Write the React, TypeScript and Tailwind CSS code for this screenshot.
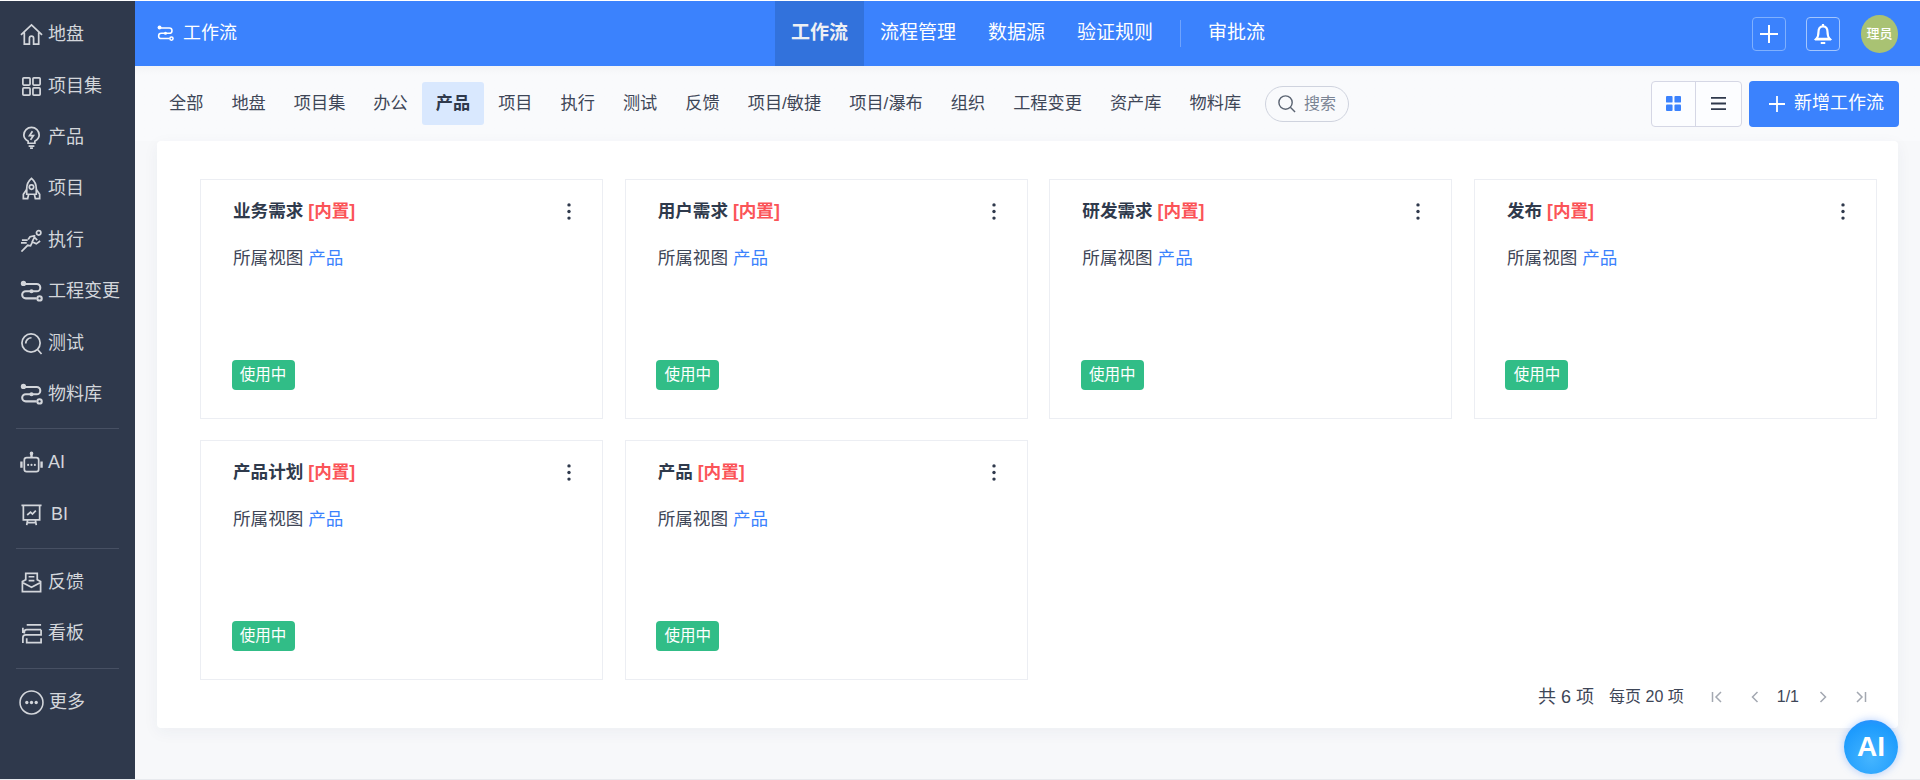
import React from 'react'

const font = { fontFamily: '"Liberation Sans", "Noto Sans CJK SC", sans-serif' }

function Route({ className }: { className?: string }) {
  return (
    <svg viewBox="0 0 20 20" fill="none" stroke="currentColor" strokeWidth="1.800" className={className}>
      <circle cx="3" cy="3" r="2.300" fill="currentColor" stroke="none" />
      <path d="M4 3.500h10.500a3 3 0 0 1 0 6.300H5a3 3 0 0 0 0 6.200h9.500" />
      <circle cx="10" cy="9.800" r="1.800" fill="currentColor" stroke="none" />
      <circle cx="17" cy="16" r="1.900" />
    </svg>
  )
}

const icons: Record<string, React.ReactNode> = {
  home: <path d="M1 12.500 12 2l11 10.500M4.500 10v12h5.300v-6a2.200 2.200 0 0 1 4.400 0v6h5.300V10" />,
  grid: (
    <>
      <rect x="3" y="3" width="7.500" height="7.500" rx="1" />
      <rect x="13.500" y="3" width="7.500" height="7.500" rx="1" />
      <rect x="3" y="13.500" width="7.500" height="7.500" rx="1" />
      <rect x="13.500" y="13.500" width="7.500" height="7.500" rx="1" />
    </>
  ),
  bulb: (
    <>
      <path d="M8.500 18v-2.200C6 14.500 4 12.300 4 9.500a8 8 0 0 1 16 0c0 2.800-2 5-4.500 6.300V18z" />
      <path d="M13 5.500 10 10h4l-3 4.500M9 21h6M10.500 23h3" />
    </>
  ),
  rocket: (
    <>
      <path d="M12 1.500c3.500 3 5 6.500 5 10.500v6H7v-6c0-4 1.500-7.500 5-10.500z" />
      <circle cx="12" cy="10.500" r="2.300" />
      <path d="M7 13l-3.500 5v4.500H8l1-4.500M17 13l3.500 5v4.500H16l-1-4.500" />
    </>
  ),
  run: (
    <>
      <circle cx="19.500" cy="4" r="2.300" />
      <path d="M1.500 23.500 8 17l3 .5 2-4 4 2 4-3M16 7l-5.500 1-2 3M12.500 14 15 8.500l3 3M2 11.500h6M1 14.500h6" />
    </>
  ),
  search: (
    <>
      <circle cx="11.500" cy="11.500" r="9.500" />
      <path d="M12 6a6 6 0 0 0-6 6M18.500 18.500l4 4.500" />
    </>
  ),
  bot: (
    <>
      <rect x="4.500" y="7" width="15" height="14.500" rx="2.500" />
      <path d="M12 7V3M1.500 11v6.500M22.500 11v6.500" strokeWidth="2.500" />
      <circle cx="12" cy="2.500" r="1" fill="currentColor" />
      <circle cx="8.500" cy="14.500" r="1.100" fill="currentColor" stroke="none" />
      <circle cx="12" cy="14.500" r="1.100" fill="currentColor" stroke="none" />
      <circle cx="15.500" cy="14.500" r="1.100" fill="currentColor" stroke="none" />
    </>
  ),
  board: (
    <>
      <path d="M1.500 2.500h21M3.500 2.500v15h17v-15M8 17.500 7 23M16 17.500l1 5.500M7 20.500h10" />
      <path d="m7.500 12.500 3.500-3 2 2 3.500-3.500" />
    </>
  ),
  mail: (
    <>
      <path d="M2.500 11 6 9V2.500h12V9l3.500 2v10.500h-19zM2.500 12l9.500 5 9.500-5" />
      <path d="M9 6h6M9 10h6" />
    </>
  ),
  kanban: (
    <path d="M22 3H7M3 6v5.500M22 8H7a2.500 2.500 0 0 0-2.500 2.500V12M22 8v5.500H6a3 3 0 0 0-3 3V22M7 17v4.500h15V17" />
  ),
}

function NavIcon({ name }: { name: string }) {
  return (
    <svg viewBox="0 0 24 24" fill="none" stroke="currentColor" strokeWidth="1.800" className="w-[23px] h-[23px] shrink-0">
      {icons[name]}
    </svg>
  )
}

function SideItem({ icon, label, gap }: { icon: string; label: string; gap?: boolean }) {
  return (
    <div className={gap ? 'h-[51.400px] flex items-center gap-[8px] pl-[20px] text-[18px] text-[#d3d6db]' : 'h-[51.400px] flex items-center gap-[5px] pl-[20px] text-[18px] text-[#d3d6db]'}>
      {icon === 'route' ? <Route className="w-[23px] h-[23px] shrink-0" /> : <NavIcon name={icon} />}
      <span>{label}</span>
    </div>
  )
}

function Sidebar() {
  return (
    <aside className="w-[135px] shrink-0 bg-[#2f394c] pt-[8px]">
      <SideItem icon="home" label="地盘" />
      <SideItem icon="grid" label="项目集" />
      <SideItem icon="bulb" label="产品" />
      <SideItem icon="rocket" label="项目" />
      <SideItem icon="run" label="执行" />
      <SideItem icon="route" label="工程变更" />
      <SideItem icon="search" label="测试" />
      <SideItem icon="route" label="物料库" />
      <div className="mx-[16px] mt-[8px] mb-[8px] h-px bg-[#475063]" />
      <SideItem icon="bot" label="AI" />
      <SideItem icon="board" label="BI" gap />
      <div className="mx-[16px] my-[8px] h-px bg-[#475063]" />
      <SideItem icon="mail" label="反馈" />
      <SideItem icon="kanban" label="看板" />
      <div className="mx-[16px] my-[8px] h-px bg-[#475063]" />
      <div className="h-[51.400px] flex items-center gap-[5px] pl-[19px] text-[18px] text-[#d3d6db]">
        <svg viewBox="0 0 24 24" fill="none" stroke="currentColor" strokeWidth="1.500" className="w-[25px] h-[25px] shrink-0">
          <circle cx="12" cy="12" r="11" />
          <circle cx="7.500" cy="12" r="1.600" fill="currentColor" stroke="none" />
          <circle cx="12" cy="12" r="1.600" fill="currentColor" stroke="none" />
          <circle cx="16.500" cy="12" r="1.600" fill="currentColor" stroke="none" />
        </svg>
        <span>更多</span>
      </div>
    </aside>
  )
}

function TopBar() {
  return (
    <header className="h-[65px] shrink-0 bg-[#3b82fd] flex items-center text-white">
      <div className="w-[640px] shrink-0 pl-[22px] flex items-center gap-[9px] text-[18px]">
        <Route className="w-[17px] h-[17px]" />
        <span>工作流</span>
      </div>
      <nav className="flex h-full items-center text-[19px]">
        <a className="h-full flex items-center px-4 bg-[#3272dc] font-bold text-[#eef0f4]">工作流</a>
        <a className="px-4">流程管理</a>
        <a className="px-4">数据源</a>
        <a className="px-4">验证规则</a>
        <span className="ml-[11px] mr-[27px] w-px h-[27px] bg-[#6fa3fd]" />
        <a>审批流</a>
      </nav>
      <div className="ml-auto mr-[22px] flex items-center">
        <button className="w-[34px] h-[34px] rounded-[4px] border border-[#7fb0fe] flex items-center justify-center">
          <svg viewBox="0 0 20 20" className="w-[20px] h-[20px]" stroke="currentColor" strokeWidth="2">
            <path d="M10 1v18M1 10h18" />
          </svg>
        </button>
        <button className="ml-[20px] w-[34px] h-[34px] rounded-[4px] border border-[#a3c6fe] flex items-center justify-center">
          <svg viewBox="0 0 20 24" className="w-[18px] h-[22px]" fill="none" stroke="currentColor" strokeWidth="2.400">
            <path d="M10 1v2.500M10 3.500c-3.500 0-5 2.700-5 6 0 3.500-.5 6-2.500 8h15c-2-2-2.500-4.500-2.500-8 0-3.300-1.500-6-5-6zM1 18h18M7.500 22h5" />
          </svg>
        </button>
        <div className="ml-[21px] w-[37px] h-[38px] rounded-full bg-[#a9c273] flex items-center justify-center text-[13px] font-medium">理员</div>
      </div>
    </header>
  )
}

const tabs = ['全部', '地盘', '项目集', '办公', '产品', '项目', '执行', '测试', '反馈', '项目/敏捷', '项目/瀑布', '组织', '工程变更', '资产库', '物料库']

function TabBar() {
  return (
    <div className="h-[75px] shrink-0 flex items-center pl-[20px] pr-[21px] bg-gradient-to-b from-[#f3f4f6] to-[#f9fafc] to-[12%]">
      {tabs.map((t) => (
        <a
          key={t}
          className={
            t === '产品'
              ? 'h-[43px] flex items-center px-[14px] rounded-[3px] bg-[#d9e8fe] font-bold text-[#2f394c] text-[17.200px]'
              : 'h-[43px] flex items-center px-[14px] text-[#3e4657] text-[17.200px]'
          }
        >
          {t}
        </a>
      ))}
      <div className="ml-[10px] w-[84px] h-[36px] rounded-full border border-[#cfd3de] flex items-center pl-[11px] gap-[8px] text-[16px] text-[#7b8494]">
        <svg viewBox="0 0 20 20" fill="none" stroke="#5b6472" strokeWidth="1.500" className="w-[19px] h-[19px]">
          <circle cx="9" cy="9" r="7" />
          <path d="m14 14 5 5" />
        </svg>
        <span>搜索</span>
      </div>
      <div className="ml-auto flex h-[46px] w-[91px] rounded-[4px] border border-[#d5d7e5] bg-[#fcfdff]">
        <div className="w-[44px] border-r border-[#d5d7e5] flex items-center justify-center">
          <svg viewBox="0 0 16 16" className="w-[15px] h-[15px]" fill="#3b82fd">
            <rect width="7" height="7" rx="1" />
            <rect x="9" width="7" height="7" rx="1" />
            <rect y="9" width="7" height="7" rx="1" />
            <rect x="9" y="9" width="7" height="7" rx="1" />
          </svg>
        </div>
        <div className="flex-1 flex items-center justify-center">
          <svg viewBox="0 0 16 16" className="w-[15px] h-[15px]" stroke="#2f394c" strokeWidth="2">
            <path d="M0 2h16M0 8h16M0 14h16" />
          </svg>
        </div>
      </div>
      <button className="ml-[7px] w-[150px] h-[46px] rounded-[4px] bg-[#3b82fd] text-white text-[18px] flex items-center pl-[20px] gap-[9px]">
        <svg viewBox="0 0 16 16" className="w-[16px] h-[16px]" stroke="currentColor" strokeWidth="1.800">
          <path d="M8 0v16M0 8h16" />
        </svg>
        新增工作流
      </button>
    </div>
  )
}

function WorkCard({ title }: { title: string }) {
  return (
    <div className="h-[240px] border border-[#eceef3] pl-[32px] pr-[31px] flex flex-col">
      <div className="mt-[18px] h-[26px] flex items-center justify-between text-[17.600px]">
        <div className="font-bold text-[#2f3a4c]">
          {title} <span className="text-[#fb5458]">[内置]</span>
        </div>
        <svg viewBox="0 0 4 18" className="w-[4px] h-[17px]" fill="#2f394c">
          <circle cx="2" cy="2" r="1.800" />
          <circle cx="2" cy="9" r="1.800" />
          <circle cx="2" cy="16" r="1.800" />
        </svg>
      </div>
      <div className="mt-[21px] text-[17.600px] text-[#3e4657]">
        所属视图 <span className="text-[#3b82fd]">产品</span>
      </div>
      <div className="mt-auto mb-[28px] -ml-[1.500px] w-[63px] h-[30px] rounded-[4px] bg-[#31bd87] text-white text-[15.500px] flex items-center justify-center">使用中</div>
    </div>
  )
}

function Pager() {
  return (
    <div className="-mt-[6px] h-[46px] flex items-center justify-end text-[#3e4657]">
      <span className="text-[18px]">共 6 项</span>
      <span className="ml-[15px] text-[16px]">每页 20 项</span>
      <svg viewBox="0 0 12 12" className="ml-[27px] w-[12px] h-[12px]" fill="none" stroke="#a3a8b1" strokeWidth="1.500">
        <path d="M1.500 1v10M10 1 5 6l5 5" />
      </svg>
      <svg viewBox="0 0 12 12" className="ml-[26px] w-[12px] h-[12px]" fill="none" stroke="#a3a8b1" strokeWidth="1.500">
        <path d="M8.500 1l-5 5 5 5" />
      </svg>
      <span className="ml-[16px] text-[16px]">1/1</span>
      <svg viewBox="0 0 12 12" className="ml-[18px] w-[12px] h-[12px]" fill="none" stroke="#a3a8b1" strokeWidth="1.500">
        <path d="M3.500 1l5 5-5 5" />
      </svg>
      <svg viewBox="0 0 12 12" className="ml-[26px] w-[12px] h-[12px]" fill="none" stroke="#a3a8b1" strokeWidth="1.500">
        <path d="M10.500 1v10M2 1l5 5-5 5" />
      </svg>
    </div>
  )
}

export default function App() {
  const cards = ['业务需求', '用户需求', '研发需求', '发布', '产品计划', '产品']
  return (
    <div style={font} className="relative h-[780px] w-[1920px] overflow-hidden flex flex-col bg-[#f7f8fa]">
      <div className="h-px bg-white shrink-0" />
      <div className="flex flex-1 min-h-0">
        <Sidebar />
        <main className="flex-1 min-w-0 flex flex-col">
          <TopBar />
          <TabBar />
          <section className="ml-[22px] mr-[22px] h-[587px] rounded-[4px] bg-white shadow-[0_4px_16px_rgba(30,50,90,0.05)] pt-[38px] pl-[43px] pr-[21px]">
            <div className="grid grid-cols-4 gap-x-[21.600px] gap-y-[21px]">
              {cards.map((c) => (
                <WorkCard key={c} title={c} />
              ))}
            </div>
            <div className="pr-[10px]">
              <Pager />
            </div>
          </section>
        </main>
      </div>
      <div className="h-px bg-[#e8eaee] shrink-0" />
      <div className="absolute right-[22px] bottom-[6px] w-[54px] h-[54px] rounded-full bg-[radial-gradient(circle_at_50%_70%,#45b5ff,#1d9bfd_70%,#3b82fd)] shadow-[0_0_8px_rgba(59,130,253,0.4)] flex items-center justify-center text-white font-bold text-[28px]">
        AI
      </div>
    </div>
  )
}
